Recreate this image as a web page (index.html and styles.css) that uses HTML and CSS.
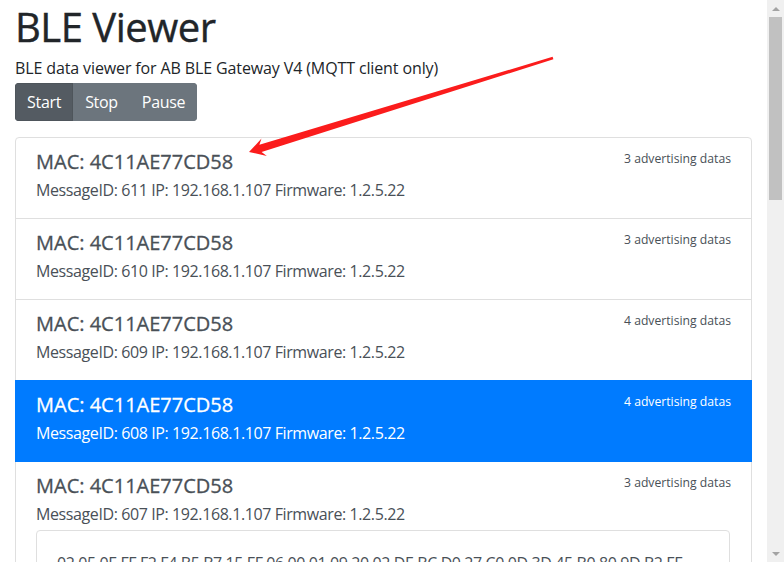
FILE: index.html
```html
<!DOCTYPE html>
<html lang="en">
<head>
    <meta charset="UTF-8">
    <title>BLE Viewer</title>
    <link rel="stylesheet" href="styles.css">
</head>
<body>
    <div class="page">
        <main class="container">
            <h1>BLE Viewer</h1>
            <p class="intro">BLE data viewer for AB BLE Gateway V4 (MQTT client only)</p>
            <div class="btn-group">
                <button class="btn active">Start</button>
                <button class="btn">Stop</button>
                <button class="btn">Pause</button>
            </div>

            <div class="list-group">
                <a class="item">
                    <div class="item-head">
                        <h5>MAC: 4C11AE77CD58</h5>
                        <small>3 advertising datas</small>
                    </div>
                    <p>MessageID: 611 IP: 192.168.1.107 Firmware: 1.2.5.22</p>
                </a>
                <a class="item">
                    <div class="item-head">
                        <h5>MAC: 4C11AE77CD58</h5>
                        <small>3 advertising datas</small>
                    </div>
                    <p>MessageID: 610 IP: 192.168.1.107 Firmware: 1.2.5.22</p>
                </a>
                <a class="item">
                    <div class="item-head">
                        <h5>MAC: 4C11AE77CD58</h5>
                        <small>4 advertising datas</small>
                    </div>
                    <p>MessageID: 609 IP: 192.168.1.107 Firmware: 1.2.5.22</p>
                </a>
                <a class="item selected">
                    <div class="item-head">
                        <h5>MAC: 4C11AE77CD58</h5>
                        <small>4 advertising datas</small>
                    </div>
                    <p>MessageID: 608 IP: 192.168.1.107 Firmware: 1.2.5.22</p>
                </a>
                <a class="item">
                    <div class="item-head">
                        <h5>MAC: 4C11AE77CD58</h5>
                        <small>3 advertising datas</small>
                    </div>
                    <p>MessageID: 607 IP: 192.168.1.107 Firmware: 1.2.5.22</p>
                    <div class="card">
                        <div class="card-body">02 05 0E FF F2 F4 B5 B7 15 FF 06 00 01 09 20 02 DE BC D0 27 C0 0D 3D 45 B0 80 9D B2 FF</div>
                    </div>
                </a>
            </div>
        </main>

        <div class="scrollbar">
            <div class="sb-arrow up"></div>
            <div class="sb-thumb"></div>
            <div class="sb-space"></div>
            <div class="sb-arrow down"></div>
        </div>
    </div>

    <!-- annotation arrow drawn over the screenshot -->
    <svg class="annotation" width="784" height="562" viewBox="0 0 784 562">
        <polygon fill="#fb1c1c" points="249,152 266.8,155.9 261.6,152.1 553.4,59.2 552.6,56.8 259.4,144.8 261.5,138.6"/>
    </svg>
</body>
</html>
```

FILE: styles.css
```css
* {
    margin: 0;
    padding: 0;
    box-sizing: border-box;
}

body {
    font-family: "Segoe UI", "Open Sans", sans-serif;
    font-size: 16px;
    line-height: 1.5;
    color: #212529;
    background: #fff;
    height: 562px;
    overflow: hidden;
}

.page {
    display: flex;
    height: 562px;
}

.container {
    flex: 1;
    padding: 0 15px;
    overflow: hidden;
}

h1 {
    font-size: 40px;
    font-weight: 500;
    line-height: 1.2;
    letter-spacing: -0.5px;
    padding-top: 3px;
    margin-bottom: 5px;
    -webkit-text-stroke: 0.4px #212529;
}

.intro {
    margin-bottom: 3px;
    letter-spacing: -0.12px;
}

.btn-group {
    display: inline-flex;
    border-radius: 4px;
    overflow: hidden;
    margin-bottom: 16px;
}

.btn {
    font: inherit;
    color: #fff;
    background-color: #6c757d;
    border: 1px solid #6c757d;
    padding: 6px 11px;
    line-height: 1.5;
    letter-spacing: -0.3px;
}

.btn.active {
    background-color: #545b62;
    border-color: #4e555b;
}

.list-group {
    display: flex;
    flex-direction: column;
    border: 1px solid #dfdfdf;
    border-radius: 4px;
}

.item {
    display: block;
    color: #495057;
    padding: 12px 20px;
    border-bottom: 1px solid #dfdfdf;
}

.item:last-child {
    border-bottom: none;
}

.item-head {
    display: flex;
    justify-content: space-between;
}

.item h5 {
    font-size: 20px;
    font-weight: 500;
    line-height: 1.2;
    margin-bottom: 4px;
    -webkit-text-stroke: 0.3px currentColor;
}

.item small {
    font-size: 12.2px;
    line-height: 1.5;
}

.item p {
    margin-bottom: 4px;
    letter-spacing: -0.4px;
}

.item.selected {
    background-color: #007bff;
    border-bottom-color: #007bff;
    color: #fff;
    margin: -1px -1px 0;
    padding: 13px 21px 12px;
}

.card {
    border: 1px solid #dfdfdf;
    border-radius: 4px;
    margin-right: 1px;
}

.card-body {
    padding: 20px;
    letter-spacing: -0.4px;
}

.scrollbar {
    width: 17px;
    background: #f0f0f0;
    display: flex;
    flex-direction: column;
    align-items: center;
}

.sb-arrow {
    height: 17px;
    width: 17px;
    display: flex;
    align-items: center;
    justify-content: center;
}

.sb-arrow::before {
    content: "";
    border-left: 4px solid transparent;
    border-right: 4px solid transparent;
}

.sb-arrow.up::before {
    border-bottom: 4px solid #a3a3a3;
}

.sb-arrow.down::before {
    border-top: 4px solid #a3a3a3;
}

.sb-thumb {
    width: 13px;
    height: 183px;
    background: #c1c1c1;
}

.sb-space {
    flex: 1;
}

.annotation {
    position: absolute;
    left: 0;
    top: 0;
    pointer-events: none;
}
```
